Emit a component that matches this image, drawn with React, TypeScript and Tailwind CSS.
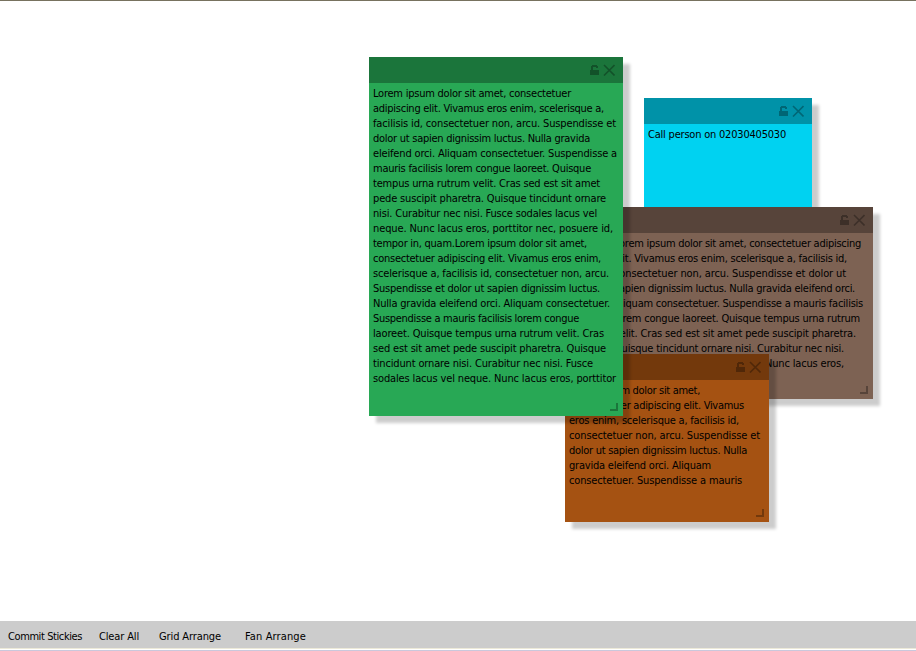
import { useLayoutEffect, useRef } from "react";

type Row = [text: string, width: number];

function Line({ text, width, className = "" }: { text: string; width: number; className?: string }) {
  const ref = useRef<HTMLSpanElement>(null);
  useLayoutEffect(() => {
    const el = ref.current;
    if (!el) return;
    el.style.letterSpacing = "0px";
    const natural = el.getBoundingClientRect().width;
    el.style.letterSpacing = `${(width - natural) / text.length}px`;
  }, [text, width]);
  return (
    <div className={`h-[15px] whitespace-nowrap ${className}`}>
      <span ref={ref}>{text}</span>
    </div>
  );
}

function Lock() {
  return (
    <svg width="9" height="12" viewBox="0 0 9 12" shapeRendering="crispEdges" fill="currentColor">
      <path d="M0 6h1V2h1V1h5v1h1v2H6V3H3v3h6v5H0z" />
    </svg>
  );
}

function Cross() {
  return (
    <svg width="12" height="12" viewBox="0 0 12 12" fill="none" stroke="currentColor" strokeWidth="1.6">
      <path d="M1 1l10.5 10.5M11.5 1L1 11.5" />
    </svg>
  );
}

function Note({ place, rows }: { place: string; rows: Row[] }) {
  return (
    <article className={`absolute flex flex-col shadow-[7px_7px_3px_rgba(0,0,0,0.2)] ${place}`}>
      <header className="flex h-[26px] shrink-0 items-center justify-end gap-1 bg-black/30 pr-2 text-black/30">
        <Lock />
        <Cross />
      </header>
      <div className="pl-1 pt-[3px]">
        {rows.map(([text, width]) => (
          <Line key={text} text={text} width={width} />
        ))}
      </div>
      <svg className="absolute bottom-[5px] right-[5px] text-black/30" width="8" height="8" viewBox="0 0 8 8" shapeRendering="crispEdges">
        <path d="M6 0h2v8H0V6h6z" fill="currentColor" />
      </svg>
    </article>
  );
}

const green: Row[] = [
  ["Lorem ipsum dolor sit amet, consectetuer", 198],
  ["adipiscing elit. Vivamus eros enim, scelerisque a,", 231],
  ["facilisis id, consectetuer non, arcu. Suspendisse et", 243],
  ["dolor ut sapien dignissim luctus. Nulla gravida", 217],
  ["eleifend orci. Aliquam consectetuer. Suspendisse a", 244],
  ["mauris facilisis lorem congue laoreet. Quisque", 218],
  ["tempus urna rutrum velit. Cras sed est sit amet", 227],
  ["pede suscipit pharetra. Quisque tincidunt ornare", 233],
  ["nisi. Curabitur nec nisi. Fusce sodales lacus vel", 224],
  ["neque. Nunc lacus eros, porttitor nec, posuere id,", 240],
  ["tempor in, quam.Lorem ipsum dolor sit amet,", 214],
  ["consectetuer adipiscing elit. Vivamus eros enim,", 228],
  ["scelerisque a, facilisis id, consectetuer non, arcu.", 236],
  ["Suspendisse et dolor ut sapien dignissim luctus.", 227],
  ["Nulla gravida eleifend orci. Aliquam consectetuer.", 237],
  ["Suspendisse a mauris facilisis lorem congue", 206],
  ["laoreet. Quisque tempus urna rutrum velit. Cras", 231],
  ["sed est sit amet pede suscipit pharetra. Quisque", 233],
  ["tincidunt ornare nisi. Curabitur nec nisi. Fusce", 220],
  ["sodales lacus vel neque. Nunc lacus eros, porttitor", 243],
];

const brown: Row[] = [
  ["Lorem ipsum dolor sit amet, consectetuer adipiscing", 247],
  ["elit. Vivamus eros enim, scelerisque a, facilisis id,", 233],
  ["consectetuer non, arcu. Suspendisse et dolor ut", 232],
  ["sapien dignissim luctus. Nulla gravida eleifend orci.", 241],
  ["Aliquam consectetuer. Suspendisse a mauris facilisis", 249],
  ["lorem congue laoreet. Quisque tempus urna rutrum", 246],
  ["velit. Cras sed est sit amet pede suscipit pharetra.", 242],
  ["Quisque tincidunt ornare nisi. Curabitur nec nisi.", 230],
  ["Fusce sodales lacus vel neque. Nunc lacus eros,", 230],
];

const orange: Row[] = [
  ["Lorem ipsum dolor sit amet,", 131],
  ["consectetuer adipiscing elit. Vivamus", 175],
  ["eros enim, scelerisque a, facilisis id,", 170],
  ["consectetuer non, arcu. Suspendisse et", 191],
  ["dolor ut sapien dignissim luctus. Nulla", 178],
  ["gravida eleifend orci. Aliquam", 142],
  ["consectetuer. Suspendisse a mauris", 173],
];

export default function App() {
  return (
    <div className="flex h-[651px] w-[916px] flex-col overflow-hidden bg-white font-['DejaVu_Sans_Condensed','DejaVu_Sans',sans-serif] text-[11px] leading-[15px] text-black">
      <main className="relative flex-1 border-t border-[#77725f]">
        <Note place="left-[644px] top-[97px] h-[140px] w-[168px] bg-[#00d2f1]" rows={[["Call person on 02030405030", 138]]} />
        <Note place="left-[610px] top-[206px] h-[192px] w-[263px] bg-[#7d6253]" rows={brown} />
        <Note place="left-[565px] top-[353px] h-[168px] w-[204px] bg-[#a55212]" rows={orange} />
        <Note place="left-[369px] top-[56px] h-[359px] w-[254px] bg-[#28a855]" rows={green} />
      </main>
      <footer className="flex h-[27px] items-center bg-[#cccccc] pl-2 pt-[3px]">
        <Line text="Commit Stickies" width={74} className="w-[91px]" />
        <Line text="Clear All" width={40} className="w-[60px]" />
        <Line text="Grid Arrange" width={62} className="w-[86px]" />
        <Line text="Fan Arrange" width={61} />
      </footer>
      <div className="h-[3px] border-b border-t border-b-[#cac8dc] border-t-[#ece9d8] bg-white" />
    </div>
  );
}
